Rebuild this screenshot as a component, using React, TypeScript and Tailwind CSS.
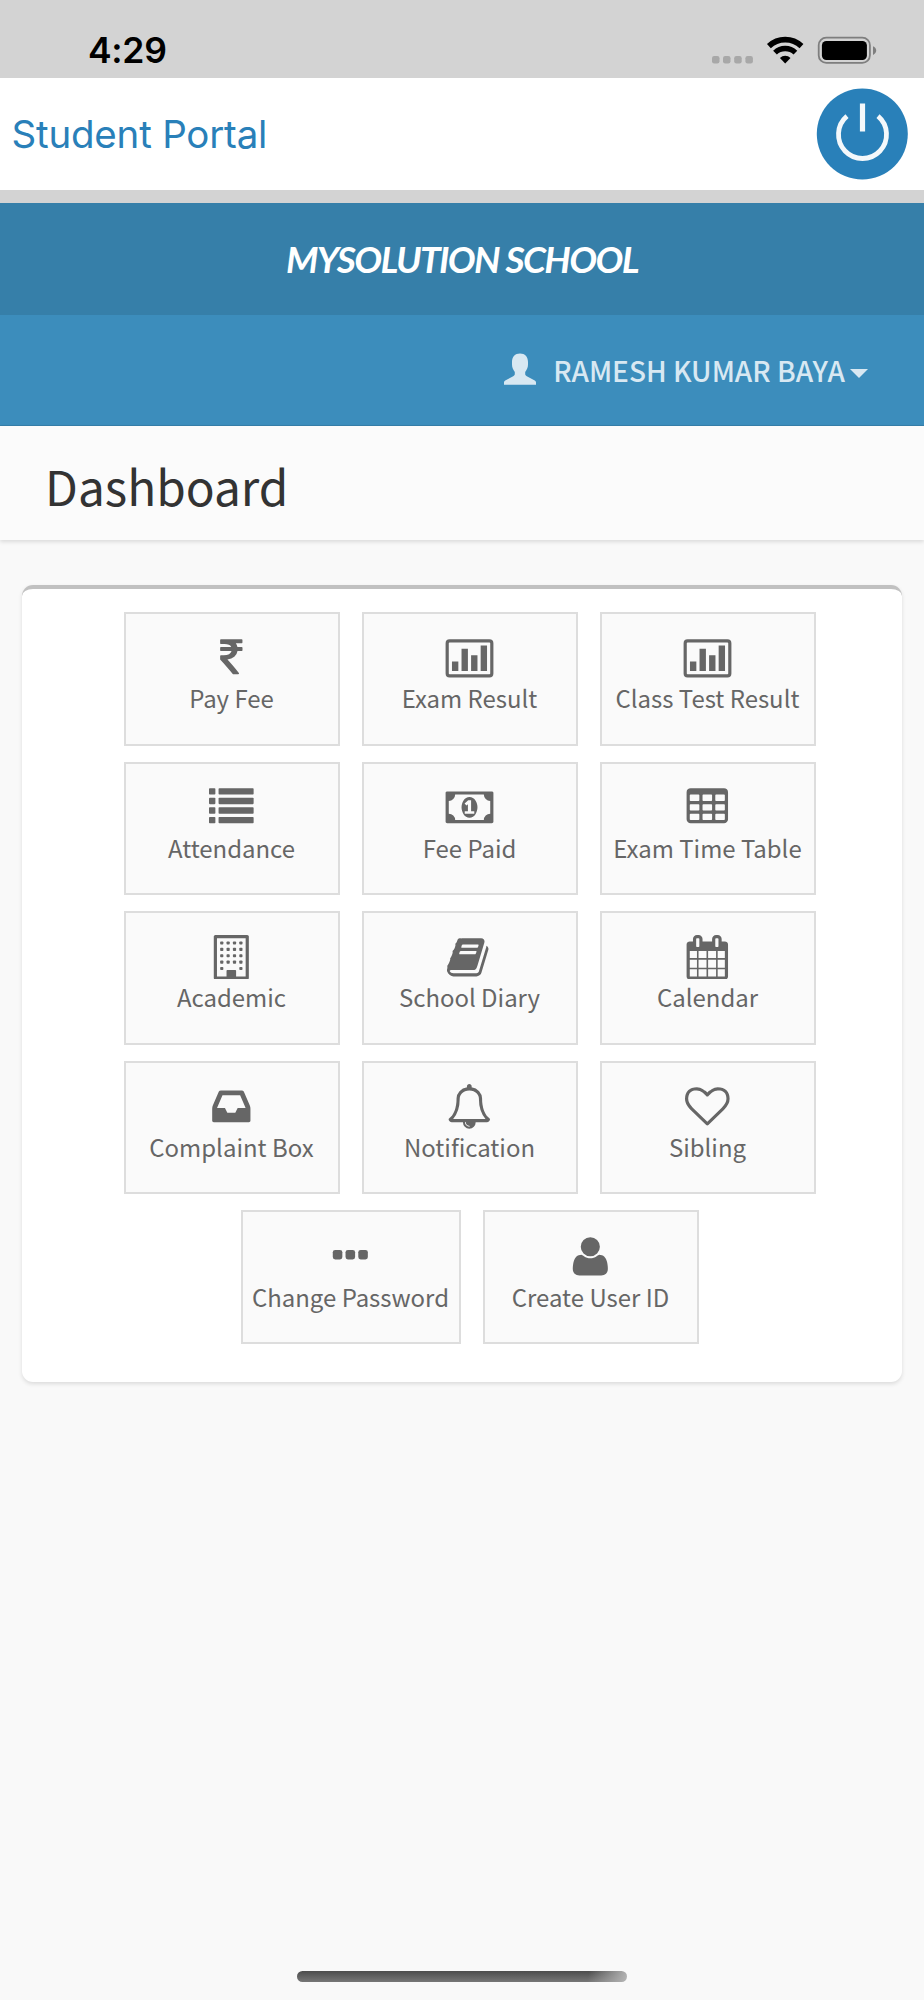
import React from "react";

type IconProps = { children: React.ReactNode; width?: number };

function Glyph({ children, width = 1792 }: IconProps) {
  return (
    <svg
      viewBox={`0 0 ${width} 1792`}
      className={width === 2048 ? "h-[44.64px] w-[51px] shrink-0" : "h-[44.64px] w-[44.64px] shrink-0"}
      fill="currentColor"
    >
      {children}
    </svg>
  );
}

const Rupee = () => (
  <Glyph>
    <path d="M1345 470v102q0 14-9 23t-23 9h-168q-23 144-129 234t-276 110q167 178 459 536 14 16 4 34-8 18-29 18h-195q-16 0-25-12-306-367-498-571-9-9-9-22v-127q0-13 9.5-22.5t22.5-9.5h112q132 0 212.5-43t102.5-125h-427q-14 0-23-9t-9-23v-102q0-14 9-23t23-9h413q-57-113-268-113h-145q-13 0-22.5-9.5t-9.5-22.5v-133q0-14 9-23t23-9h832q14 0 23 9t9 23v102q0 14-9 23t-23 9h-233q47 61 64 144h171q14 0 23 9t9 23z" />
  </Glyph>
);

const BarChart = () => (
  <Glyph width={2048}>
    <rect x="128" y="192" width="1792" height="1408" rx="96" fill="none" stroke="currentColor" strokeWidth="128" />
    <path d="M320 1024h256v384H320zM704 512h256v896H704zM1088 768h256v640h-256zM1472 384h256v1024h-256z" />
  </Glyph>
);

const List = () => (
  <Glyph>
    {[128, 512, 896, 1280].map((y) => (
      <g key={y}>
        <rect x="0" y={y} width="256" height="256" rx="32" />
        <rect x="384" y={y} width="1408" height="256" rx="32" />
      </g>
    ))}
  </Glyph>
);

const Money = () => (
  <Glyph width={2048}>
    <path
      fillRule="evenodd"
      d="M832 1152h384v-96h-128v-448h-114l-148 137 77 80q42-37 55-57h2v288h-128v96zm512-256q0 70-21 142t-59.5 134-101.5 101-138 39-138-39-101.5-101-59.5-134-21-142 21-142 59.5-134 101.5-101 138-39 138 39 101.5 101 59.5 134 21 142zm512 256v-512q-106 0-181-75t-75-181h-1152q0 106-75 181t-181 75v512q106 0 181 75t75 181h1152q0-106 75-181t181-75zm128-832v1152q0 26-19 45t-45 19h-1792q-26 0-45-19t-19-45v-1152q0-26 19-45t45-19h1792q26 0 45 19t19 45z"
    />
  </Glyph>
);

const Table = () => (
  <Glyph>
    <path
      fillRule="evenodd"
      d="M224 128h1344q66 0 113 47t47 113v1088q0 66-47 113t-113 47H224q-66 0-113-47t-47-113V288q0-66 47-113t113-47z
      M224 384h320q32 0 32 32v192q0 32-32 32H224q-32 0-32-32V416q0-32 32-32z
      M736 384h320q32 0 32 32v192q0 32-32 32H736q-32 0-32-32V416q0-32 32-32z
      M1248 384h320q32 0 32 32v192q0 32-32 32h-320q-32 0-32-32V416q0-32 32-32z
      M224 768h320q32 0 32 32v192q0 32-32 32H224q-32 0-32-32V800q0-32 32-32z
      M736 768h320q32 0 32 32v192q0 32-32 32H736q-32 0-32-32V800q0-32 32-32z
      M1248 768h320q32 0 32 32v192q0 32-32 32h-320q-32 0-32-32V800q0-32 32-32z
      M224 1152h320q32 0 32 32v192q0 32-32 32H224q-32 0-32-32v-192q0-32 32-32z
      M736 1152h320q32 0 32 32v192q0 32-32 32H736q-32 0-32-32v-192q0-32 32-32z
      M1248 1152h320q32 0 32 32v192q0 32-32 32h-320q-32 0-32-32v-192q0-32 32-32z"
    />
  </Glyph>
);

const Building = () => (
  <Glyph>
    <path
      fillRule="evenodd"
      d="M256 0h1280q26 0 45 19t19 45v1664q0 26-19 45t-45 19H256q-26 0-45-19t-19-45V64q0-26 19-45t45-19zM320 128v1536h384v-224q0-32 32-32h320q32 0 32 32v224h384V128z"
    />
    {[256, 512, 768, 1024, 1280].map((y) =>
      [448, 704, 960, 1216]
        .filter((x) => y < 1280 || x === 448 || x === 1216)
        .map((x) => <rect key={`${x}-${y}`} x={x} y={y} width="128" height="128" rx="32" />)
    )}
  </Glyph>
);

const Book = () => (
  <Glyph>
    <path d="M1639 478q40 57 18 129l-275 906q-19 64-76.5 107.5t-122.5 43.5h-923q-77 0-148.5-53.5t-99.5-131.5q-24-67-2-127 0-4 3-27t4-37q1-8-3-21.5t-3-19.5q2-11 8-21t16.5-23.5 16.5-23.5q23-38 45-91.5t30-91.5q3-10 .5-30t-.5-28q3-11 17-28t17-23q21-36 42-92t25-90q1-9-2.5-32t.5-28q4-13 22-30.5t22-22.5q19-26 42.5-84.5t27.5-96.5q1-8-3-25.5t-2-26.5q2-8 9-18t18-23 17-21q8-12 16.5-30.5t15-35 16-36 19.5-32 26.5-23.5 36-11.5 47.5 5.5l-1 3q38-9 51-9h761q74 0 114 56t18 130l-274 906q-36 119-71.5 153.5t-128.5 34.5h-869q-27 0-38 15-11 16-1 43 24 70 144 70h923q29 0 56-15.5t35-41.5l300-987q7-22 5-57 38 15 59 43zm-1064 2q-4 13 2 22.5t20 9.5h608q13 0 25.5-9.5t16.5-22.5l21-64q4-13-2-22.5t-20-9.5h-608q-13 0-25.5 9.5t-16.5 22.5zm-83 256q-4 13 2 22.5t20 9.5h608q13 0 25.5-9.5t16.5-22.5l21-64q4-13-2-22.5t-20-9.5h-608q-13 0-25.5 9.5t-16.5 22.5z" />
  </Glyph>
);

const CalendarGrid = () => (
  <Glyph>
    <path
      fillRule="evenodd"
      d="M192 256h128v-96q0-66 47-113t113-47h64q66 0 113 47t47 113v96h384v-96q0-66 47-113t113-47h64q66 0 113 47t47 113v96h128q52 0 90 38t38 90v1280q0 52-38 90t-90 38H192q-52 0-90-38t-38-90V384q0-52 38-90t90-38z
      M480 128h64q32 0 32 32v288q0 32-32 32h-64q-32 0-32-32V160q0-32 32-32z
      M1248 128h64q32 0 32 32v288q0 32-32 32h-64q-32 0-32-32V160q0-32 32-32z
      M192 640h288v288H192zM544 640h320v288H544zM928 640h320v288H928zM1312 640h288v288h-288z
      M192 992h288v320H192zM544 992h320v320H544zM928 992h320v320H928zM1312 992h288v320h-288z
      M192 1376h288v288H192zM544 1376h320v288H544zM928 1376h320v288H928zM1312 1376h288v288h-288z"
    />
  </Glyph>
);

const Inbox = () => (
  <Glyph>
    <path d="M1151 960h316q-1-3-2.5-8.5t-2.5-7.5l-212-496h-708l-212 496q-1 3-2.5 8.5t-2.5 7.5h316l95 192h320zm513 30v482q0 26-19 45t-45 19h-1408q-26 0-45-19t-19-45v-482q0-62 25-123l238-552q10-25 36.5-42t52.5-17h832q26 0 52.5 17t36.5 42l238 552q25 61 25 123z" />
  </Glyph>
);

const Bell = () => (
  <Glyph>
    <path
      fillRule="evenodd"
      d="M912 1696q0-16-16-16-59 0-101.5-42.5t-42.5-101.5q0-16-16-16t-16 16q0 73 51.5 124.5t124.5 51.5q16 0 16-16zM246 1408h1300q-266-300-266-832 0-51-24-105t-69-103-121.5-80.5-169.5-31.5-169.5 31.5-121.5 80.5-69 103-24 105q0 532-266 832zm1482 0q0 52-38 90t-90 38h-448q0 106-75 181t-181 75-181-75-75-181h-448q-52 0-90-38t-38-90q50-42 91-88t85-119.5 74.5-158.5 50-206 19.5-260q0-152 117-282.5t307-158.5q-8-19-8-39 0-40 28-68t68-28 68 28 28 68q0 20-8 39 190 28 307 158.5t117 282.5q0 139 19.5 260t50 206 74.5 158.5 85 119.5 91 88z"
    />
  </Glyph>
);

const HeartOutline = () => (
  <Glyph>
    <path d="M1664 596q0-81-21.5-143t-55-98.5-81.5-59.5-94-31-98-8-112 25.5-110.5 64-86.5 72-60 61.5q-18 22-49 22t-49-22q-24-28-60-61.5t-86.5-72-110.5-64-112-25.5-98 8-94 31-81.5 59.5-55 98.5-21.5 143q0 168 187 355l581 560 580-559q188-188 188-356zm128 0q0 221-229 450l-623 600q-18 18-44 18t-44-18l-624-602q-10-8-27.5-26t-55.5-65.5-68-97.5-53.5-121-23.5-138q0-220 127-344t351-124q62 0 126.5 21.5t120 58 95.5 68.5 76 68q36-36 76-68t95.5-68.5 120-58 126.5-21.5q224 0 351 124t127 344z" />
  </Glyph>
);

const Dots = () => (
  <Glyph>
    {[192, 704, 1216].map((x) => (
      <rect key={x} x={x} y="640" width="384" height="384" rx="96" />
    ))}
  </Glyph>
);

const User = () => (
  <Glyph>
    <path d="M1600 1405q0 120-73 189.5t-194 69.5h-874q-121 0-194-69.5t-73-189.5q0-53 3.5-103.5t14-109 26.5-108.5 43-97.5 62-81 85.5-53.5 111.5-20q9 0 42 21.5t74.5 48 108 48 133.5 21.5 133.5-21.5 108-48 74.5-48 42-21.5q61 0 111.5 20t85.5 53.5 62 81 43 97.5 26.5 108.5 14 109 3.5 103.5zm-320-893q0 159-112.5 271.5t-271.5 112.5-271.5-112.5-112.5-271.5 112.5-271.5 271.5-112.5 271.5 112.5 112.5 271.5z" />
  </Glyph>
);

type Item = { label: string; icon: () => React.JSX.Element; wide?: boolean };

const rows: Item[][] = [
  [
    { label: "Pay Fee", icon: Rupee },
    { label: "Exam Result", icon: BarChart },
    { label: "Class Test Result", icon: BarChart },
  ],
  [
    { label: "Attendance", icon: List },
    { label: "Fee Paid", icon: Money },
    { label: "Exam Time Table", icon: Table },
  ],
  [
    { label: "Academic", icon: Building },
    { label: "School Diary", icon: Book },
    { label: "Calendar", icon: CalendarGrid },
  ],
  [
    { label: "Complaint Box", icon: Inbox },
    { label: "Notification", icon: Bell },
    { label: "Sibling", icon: HeartOutline },
  ],
  [
    { label: "Change Password", icon: Dots, wide: true },
    { label: "Create User ID", icon: User },
  ],
];

function Tile({ label, icon: Icon, wide }: Item) {
  return (
    <button
      className={`flex h-[133.6px] flex-col items-center border-2 border-[#ddd] bg-[#fafafa] pt-[21.5px] pr-px text-[#666] ${
        wide ? "w-[220px]" : "w-[216px]"
      }`}
    >
      <Icon />
      <span className="text-[23.95px] leading-[35px] whitespace-nowrap">{label}</span>
    </button>
  );
}

function StatusBar() {
  return (
    <div className="flex h-[78px] items-start justify-between bg-[#d3d3d3] pr-[47px] pl-[88px] text-black">
      <span className="pt-[29px] font-['Inter',sans-serif] text-[35.5px] leading-[44px] font-semibold tracking-[-0.3px]">
        4:29
      </span>
      <svg viewBox="0 0 166 30" className="mt-[35px] h-[30px] w-[166px]">
        <g fill="#a8a8a8">
          <rect x="1" y="21" width="7.5" height="7.4" rx="2.2" />
          <rect x="12" y="21" width="7.5" height="7.4" rx="2.2" />
          <rect x="23.2" y="21" width="7.5" height="7.4" rx="2.2" />
          <rect x="34.4" y="21" width="7.5" height="7.4" rx="2.2" />
        </g>
        <g fill="none" stroke="#000">
          <path d="M57.9 11.1A23.7 23.7 0 0 1 90.5 11.1" strokeWidth="5.6" />
          <path d="M64 17.6A14.8 14.8 0 0 1 84.4 17.6" strokeWidth="5.4" />
        </g>
        <path d="M74.2 28.6L68.9 22.9A7.9 7.9 0 0 1 79.5 22.9Z" />
        <rect x="107.7" y="2.7" width="51.2" height="25.2" rx="7.6" fill="none" stroke="#7e7e7e" strokeWidth="1.8" />
        <rect x="110.9" y="6" width="45" height="19" rx="4.5" />
        <path d="M162 11.2Q165.2 12.6 165.2 15.5T162 19.9Z" fill="#7e7e7e" />
      </svg>
    </div>
  );
}

export default function App() {
  return (
    <div className="relative flex h-[2000px] w-[924px] flex-col overflow-hidden bg-[#f9f9f9] font-['Noto_Sans_CJK_JP',sans-serif]">
      <StatusBar />
      <header className="flex h-[112px] items-center justify-between bg-white pr-[16px] pl-[11.5px]">
        <span className="font-['Inter',sans-serif] text-[38.5px] leading-[48px] tracking-[-0.2px] text-[#2980b9]">
          Student Portal
        </span>
        <svg viewBox="0 0 92 92" className="h-[92px] w-[92px]" fill="none">
          <circle cx="46.3" cy="46" r="45.5" fill="#2980b9" />
          <path d="M31 28.2A24 24 0 1 0 62 28.2" stroke="#f4f8fb" strokeWidth="4.8" />
          <path d="M46.5 15.5V43.5" stroke="#f4f8fb" strokeWidth="5.2" />
        </svg>
      </header>
      <div className="h-[13px] bg-[#d3d3d3]" />
      <div className="flex h-[112px] items-center justify-center bg-[#367fa9]">
        <span className="font-['Lato',sans-serif] text-[37px] leading-[48px] font-bold tracking-[-1.6px] text-white italic">
          MYSOLUTION SCHOOL
        </span>
      </div>
      <nav className="flex h-[111px] items-center justify-end border-b border-[#367fa9] bg-[#3c8dbc] pr-[56px] text-[#d8e8f2]">
        <svg viewBox="0 0 32 32" className="mr-[17px] -mt-[3px] h-[32px] w-[32px]" fill="currentColor">
          <path d="M16 .5C11 .5 8 3.8 8 9v2.5c0 3 1.2 5.5 2.8 7.4V21c0 1-.7 1.8-1.6 2.3L1.7 27.2C.6 27.8 0 28.3 0 29.3V31.700H32V29.3C32 28.3 31.4 27.8 30.3 27.2L22.8 23.3C21.9 22.8 21.2 22 21.2 21V18.9C22.8 17 24 14.5 24 11.5V9C24 3.8 21 .5 16 .5Z" />
        </svg>
        <span className="text-[28px] leading-[40px] font-medium whitespace-nowrap">RAMESH KUMAR BAYA</span>
        <svg viewBox="0 0 18 9" className="mt-[7px] ml-[5px] h-[9px] w-[18px]" fill="currentColor">
          <path d="M0 0H18L9 9Z" />
        </svg>
      </nav>
      <div className="flex h-[114px] items-center bg-[#fbfbfb] pt-[5px] pl-[45px] shadow-[0_2px_4px_rgba(0,0,0,0.12)]">
        <h1 className="text-[47.8px] leading-[60px] text-[#333]">Dashboard</h1>
      </div>
      <main className="mx-[22px] mt-[45px] flex h-[797px] flex-col items-center gap-4 rounded-[11px] border-t-4 border-[#c1c1c1] bg-white pt-[23px] pl-[16px] shadow-[0_2px_4px_rgba(0,0,0,0.12)]">
        {rows.map((row, i) => (
          <div key={i} className="flex gap-[22px]">
            {row.map((item) => (
              <Tile key={item.label} {...item} />
            ))}
          </div>
        ))}
      </main>
      <div className="mt-auto mb-[18px] h-[11px] w-[330px] self-center rounded-full bg-[linear-gradient(100deg,transparent_88%,#b5b5b5_100%),linear-gradient(#4c4c4c,#777)]" />
    </div>
  );
}
